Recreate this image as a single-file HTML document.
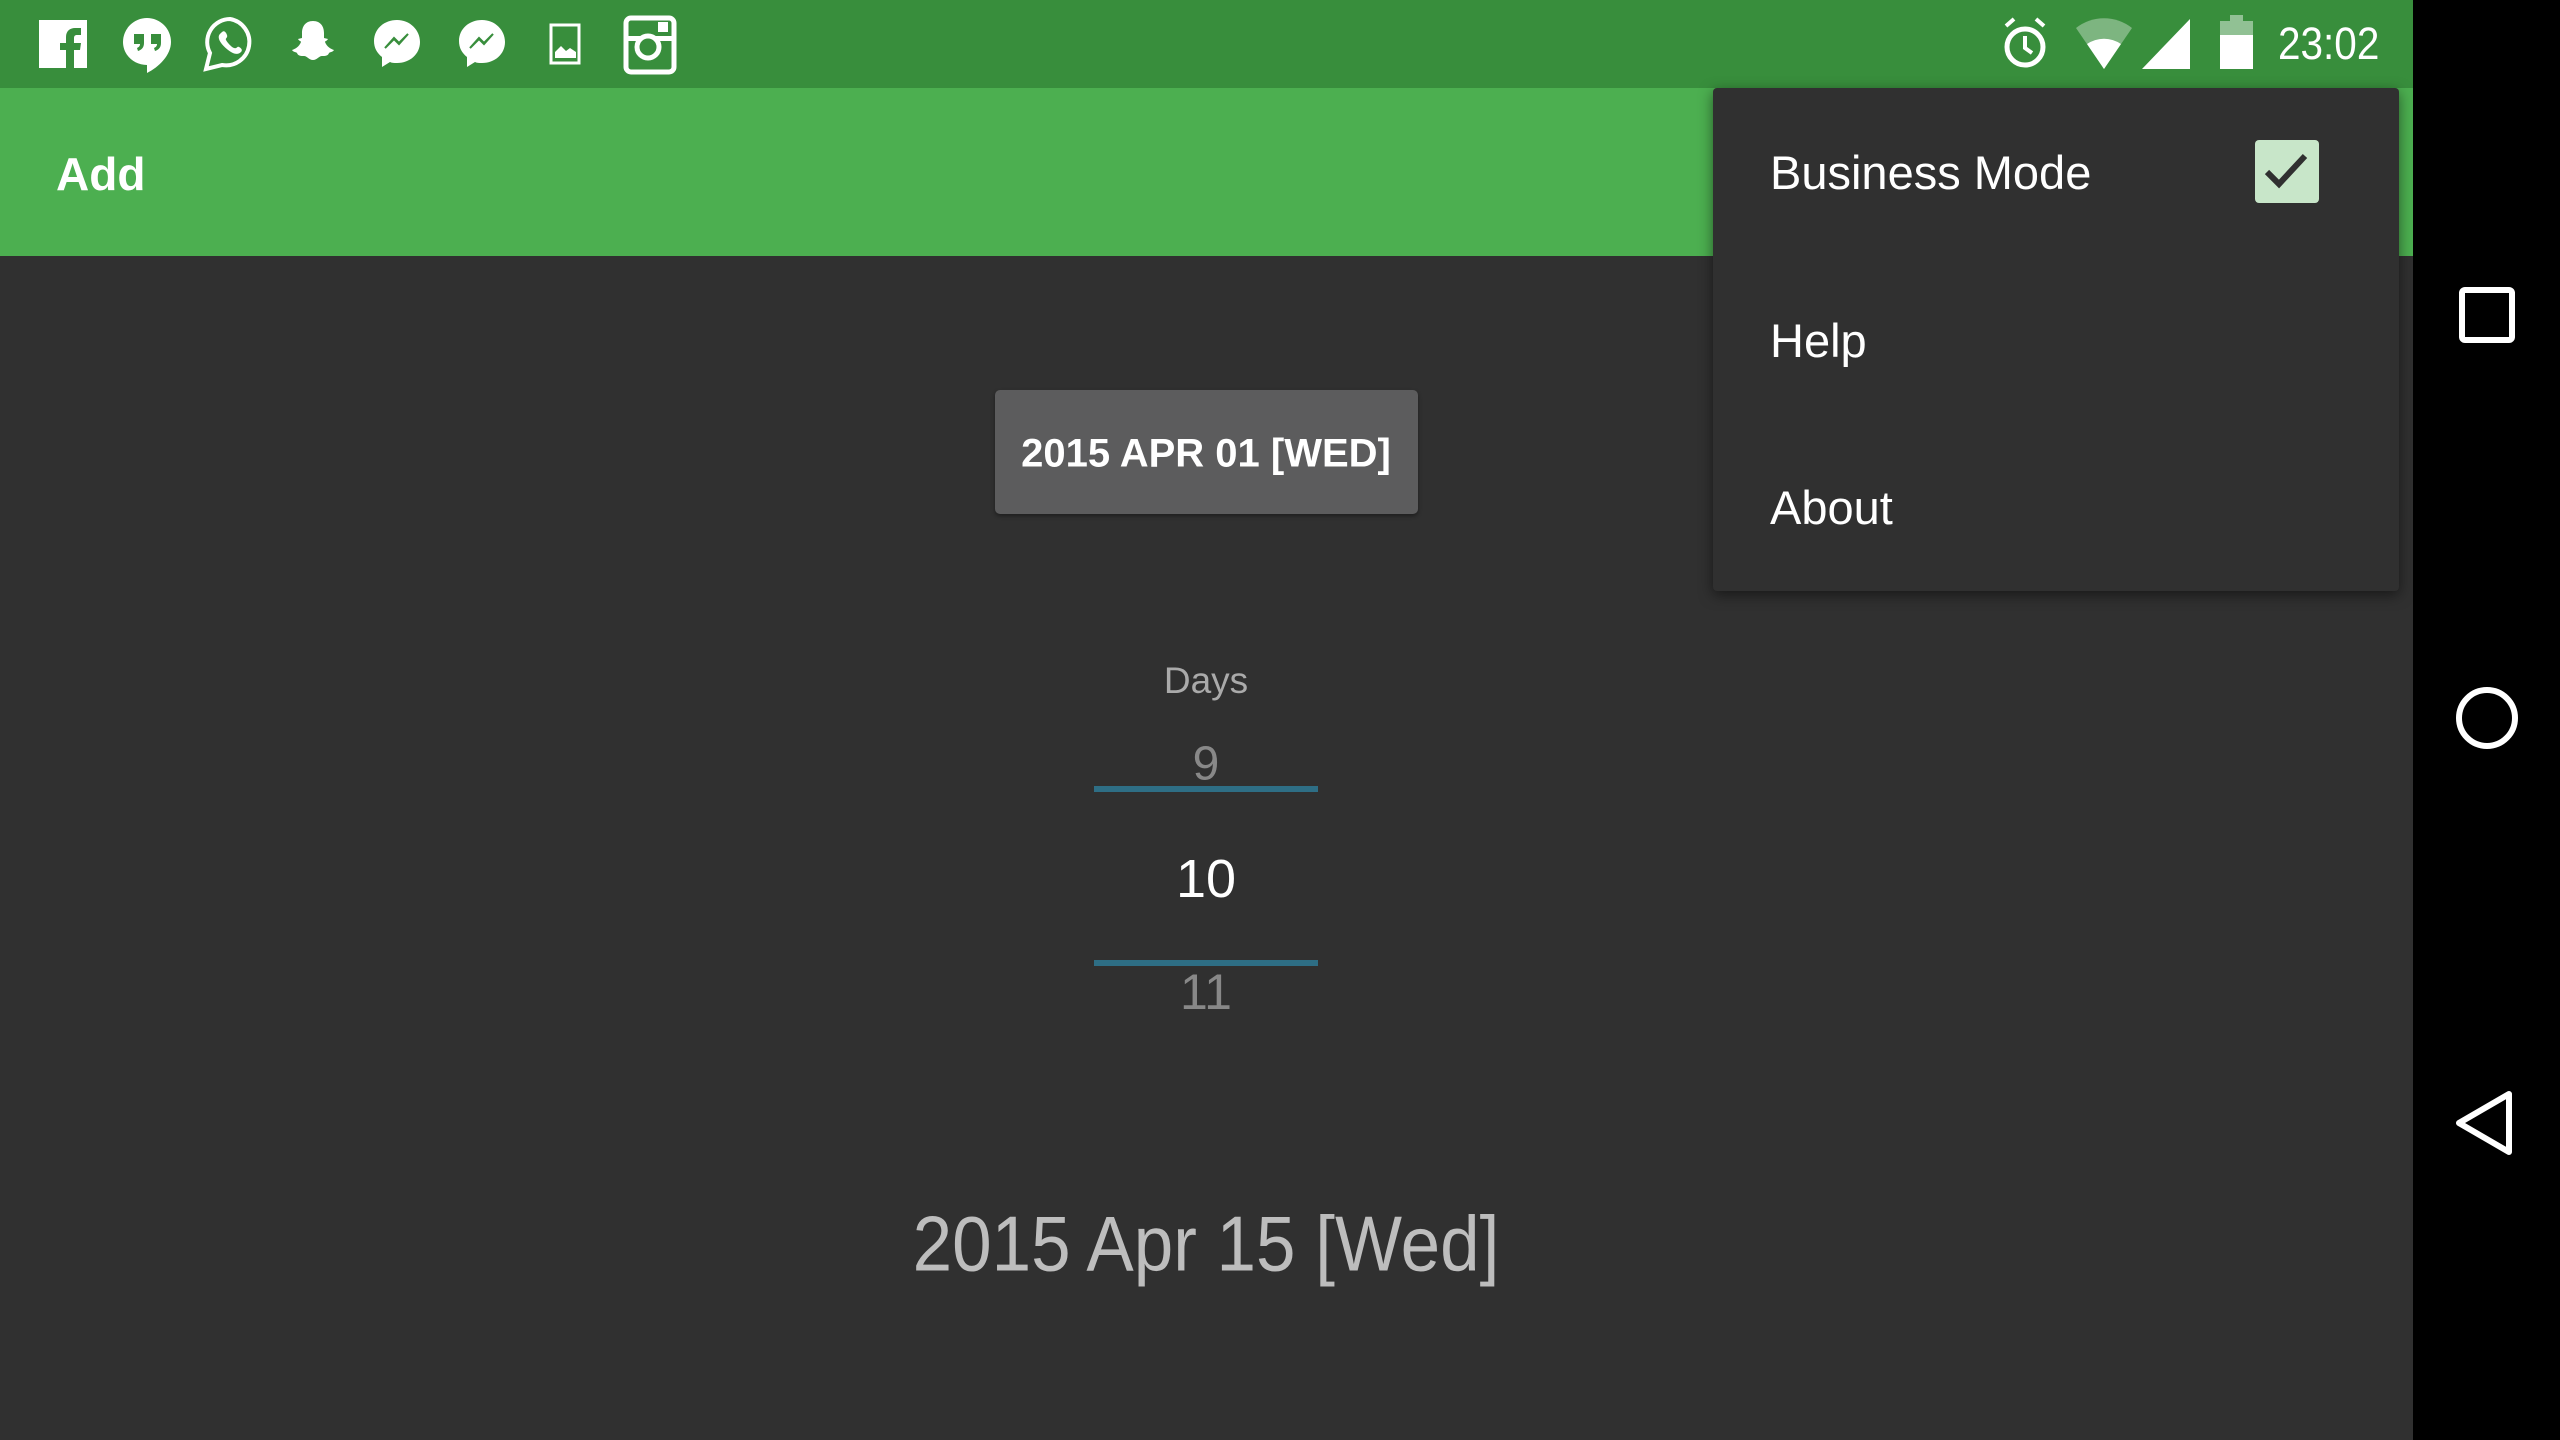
<!DOCTYPE html>
<html><head><meta charset="utf-8"><style>
*{margin:0;padding:0;box-sizing:border-box}
body{width:2560px;height:1440px;overflow:hidden;background:#303030;font-family:"Liberation Sans",sans-serif;position:relative;color:#fff}
.a{position:absolute}
.c{position:absolute;transform:translate(-50%,-50%);white-space:nowrap}
</style></head><body>
<div class="a" style="left:0;top:0;width:2413px;height:88px;background:#388e3c"></div>
<div class="a" style="left:0;top:88px;width:2413px;height:168px;background:#4caf50"></div>
<div class="a" style="left:2413px;top:0;width:147px;height:1440px;background:#000"></div>

<svg class="a" style="left:0;top:0" width="700" height="88" viewBox="0 0 700 88" fill="#fff">
 <rect x="39" y="20" width="48" height="48"/>
 <path d="M66 68V50h-6v-7h6v-6c0-6 4-9 9-9h6v7h-4c-2 0-3 1-3 3v5h7l-1 7h-6v18z" fill="#388e3c"/>
 <path d="M147 18a24 24 0 0 0-24 24c0 13 11 23 24 23v8c12-6 24-18 24-31a24 24 0 0 0-24-24z"/>
 <path d="M134 34h10v9c0 5-3 7-6 8l-1-3c2-1 3-2 3-4h-6zM151 34h10v9c0 5-3 7-6 8l-1-3c2-1 3-2 3-4h-6z" fill="#388e3c"/>
 <path d="M230 19a23 23 0 0 0-20 34l-4 16 16-4a23 23 0 1 0 8-46z" fill="none" stroke="#fff" stroke-width="4"/>
 <path d="M222 32c2-2 4 0 5 3s-2 3-1 5 5 7 8 8 3-2 5-1 4 3 2 5-5 3-10 0-11-9-12-13 1-5 3-7z"/>
 <path d="M313 21c-8 0-11 6-11 12v5l-4 1c1 2 3 2 3 3-2 5-6 7-9 8 1 2 4 2 5 3 1 3 4 3 7 3 3 0 5 4 9 4s6-4 9-4 6 0 7-3c1-1 4-1 5-3-3-1-7-3-9-8 0-1 2-1 3-3l-4-1v-5c0-6-3-12-11-12z"/>
 <g><path d="M397 20c-13 0-23 9-23 21 0 7 3 12 8 16v10l8-5c2 1 4 1 7 1 13 0 23-9 23-21s-10-22-23-22z"/>
 <path d="M385 48l9-10 5 5 9-9-9 10-5-5z" fill="#388e3c" stroke="#388e3c" stroke-width="2"/></g>
 <g><path d="M482 20c-13 0-23 9-23 21 0 7 3 12 8 16v10l8-5c2 1 4 1 7 1 13 0 23-9 23-21s-10-22-23-22z"/>
 <path d="M470 48l9-10 5 5 9-9-9 10-5-5z" fill="#388e3c" stroke="#388e3c" stroke-width="2"/></g>
 <rect x="551" y="25" width="28" height="38" fill="none" stroke="#fff" stroke-width="3"/>
 <path d="M555 58v-6l6-6 5 5 4-3 6 4v6z"/>
 <rect x="626" y="18" width="48" height="54" rx="5" fill="none" stroke="#fff" stroke-width="5"/>
 <rect x="626" y="36" width="48" height="5" fill="#fff"/>
 <circle cx="648" cy="47" r="11" fill="#388e3c" stroke="#fff" stroke-width="5"/>
 <rect x="658" y="22" width="10" height="10"/>
</svg>

<svg class="a" style="left:1990px;top:0" width="290" height="88" viewBox="0 0 290 88" fill="#fff">
 <circle cx="35" cy="47" r="18" fill="none" stroke="#fff" stroke-width="5"/>
 <path d="M35 36v12l7 5" fill="none" stroke="#fff" stroke-width="4"/>
 <path d="M16 26l8-7M54 26l-8-7" stroke="#fff" stroke-width="4"/>
 <path d="M86 28a45 45 0 0 1 56 0l-28 41z" fill="#fff" opacity=".35"/>
 <path d="M97 44a30 30 0 0 1 34 0l-17 25z"/>
 <path d="M152 69l48-50v50z"/>
 <rect x="230" y="21" width="33" height="14" opacity=".45"/>
 <rect x="240" y="15" width="13" height="6" opacity=".45"/>
 <rect x="230" y="35" width="33" height="34"/>
</svg>
<div class="a" style="left:2278px;top:18px;font-size:45px;line-height:52px;transform:scaleX(.9);transform-origin:left">23:02</div>

<div class="a" style="left:56px;top:148px;font-size:46px;line-height:52px;font-weight:bold">Add</div>

<div class="a" style="left:1713px;top:88px;width:686px;height:503px;background:#303030;border-radius:4px;box-shadow:0 4px 14px rgba(0,0,0,.5)"></div>
<div class="a" style="left:1770px;top:146px;font-size:47px;line-height:54px">Business Mode</div>
<div class="a" style="left:1770px;top:314px;font-size:47px;line-height:54px">Help</div>
<div class="a" style="left:1770px;top:481px;font-size:47px;line-height:54px">About</div>
<div class="a" style="left:2255px;top:140px;width:64px;height:63px;background:#c8e6c9;border-radius:4px"></div>
<svg class="a" style="left:2255px;top:140px" width="64" height="63"><path d="M12 32l12 12 26-28" fill="none" stroke="#303030" stroke-width="6"/></svg>

<div class="a" style="left:995px;top:390px;width:423px;height:124px;background:#5c5c5d;border-radius:5px;box-shadow:0 2px 4px rgba(0,0,0,.4)"></div>
<div class="c" style="left:1206px;top:454px;font-size:40px;font-weight:bold">2015 APR 01 [WED]</div>

<div class="c" style="left:1206px;top:681px;font-size:37px;color:#aaa">Days</div>
<div class="c" style="left:1206px;top:764px;font-size:48px;color:#888">9</div>
<div class="a" style="left:1094px;top:786px;width:224px;height:6px;background:#2e6e85"></div>
<div class="c" style="left:1206px;top:879px;font-size:54px;color:#fff">10</div>
<div class="a" style="left:1094px;top:960px;width:224px;height:6px;background:#2e6e85"></div>
<div class="a" style="left:1094px;top:966px;width:224px;height:52px;overflow:hidden"><div class="c" style="left:112px;top:26px;font-size:50px;color:#888">11</div></div>

<div class="c" style="left:1206px;top:1244px;font-size:78px;color:#bdbdbd;transform:translate(-50%,-50%) scaleX(.91)">2015 Apr 15 [Wed]</div>

<svg class="a" style="left:2413px;top:0" width="147" height="1440">
 <rect x="49" y="290" width="50" height="50" rx="3" fill="none" stroke="#fff" stroke-width="6"/>
 <circle cx="74" cy="718" r="28" fill="none" stroke="#fff" stroke-width="6"/>
 <path d="M96 1094v58l-50-29z" fill="none" stroke="#fff" stroke-width="6" stroke-linejoin="round"/>
</svg>
</body></html>
